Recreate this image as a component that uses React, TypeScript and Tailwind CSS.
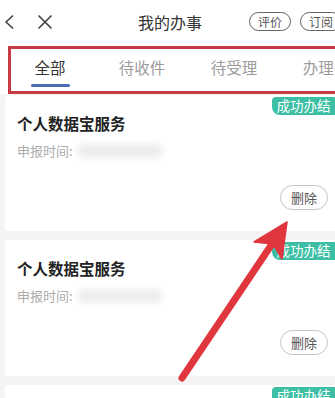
import React from 'react';

const tabs = ['全部', '待收件', '待受理', '办理中'];

const Card = ({ className = '' }: { className?: string }) => (
  <div className={`relative ml-[5px] h-[136px] shrink-0 rounded-l-[4px] bg-white pl-[12px] pr-[7px] ${className}`}>
    <div className="absolute right-0 top-[2px] flex h-[18px] w-[63px] items-center justify-center rounded-tl-[4px] rounded-bl-[8px] bg-[#3dbfa5] text-[13.5px] leading-none text-white">
      成功办结
    </div>
    <div className="pt-[17px] text-[15.5px] font-bold leading-[22px] text-[#222]">个人数据宝服务</div>
    <div className="mt-[7px] flex items-center text-[13px] leading-[20px] text-[#ababab]">
      <span>申报时间:</span>
      <span className="ml-[5px] inline-block h-[14px] w-[84px] rounded bg-[#ededed] blur-[3px]" />
    </div>
    <div className="mt-[24px] flex justify-end">
      <div className="flex h-[25px] w-[48px] items-center justify-center rounded-full border border-[#c4c4c4] text-[13px] text-[#555]">
        删除
      </div>
    </div>
  </div>
);

export default function App() {
  return (
    <div className="relative flex h-[398px] w-[335px] flex-col overflow-hidden bg-[#f4f4f4] font-['Noto_Sans_CJK_SC','Noto_Sans',sans-serif]">
      {/* header */}
      <div className="flex h-[46px] shrink-0 items-center bg-white pb-[3px]">
        <svg className="ml-[4px] shrink-0" width="10" height="14" viewBox="0 0 10 14">
          <path d="M8.5 1 L2 7 L8.5 13" fill="none" stroke="#444" strokeWidth="1.7" strokeLinecap="round" strokeLinejoin="round" />
        </svg>
        <svg className="ml-[23px] shrink-0" width="16" height="14" viewBox="0 0 16 14">
          <path d="M2 1 L14 13 M14 1 L2 13" fill="none" stroke="#444" strokeWidth="1.7" strokeLinecap="round" />
        </svg>
        <div className="ml-[85px] shrink-0 text-[16px] leading-none text-[#333]">我的办事</div>
        <div className="ml-[47px] flex h-[19px] w-[42px] shrink-0 items-center justify-center rounded-full border border-[#666] text-[12px] leading-none text-[#555]">
          评价
        </div>
        <div className="ml-[9px] flex h-[19px] w-[42px] shrink-0 items-center justify-center rounded-full border border-[#666] text-[12px] leading-none text-[#555]">
          订阅
        </div>
      </div>

      {/* tabs */}
      <div className="flex h-[48px] shrink-0 bg-white pl-[4px]">
        {tabs.map((t, i) => (
          <div key={t} className="flex w-[92px] shrink-0 flex-col items-center pt-[11px]">
            <div className={`whitespace-nowrap text-[15.5px] leading-[20px] ${i === 0 ? 'text-[#333]' : 'text-[#9b9b9b]'}`}>{t}</div>
            <div className={`mt-[7px] h-[3px] w-[39px] rounded-full ${i === 0 ? 'bg-[#4a6cb3]' : 'bg-transparent'}`} />
          </div>
        ))}
      </div>

      {/* list */}
      <div className="flex flex-col gap-[9px] pt-[1px]">
        <Card />
        <Card />
        <Card />
      </div>

      {/* annotation: red box around tabs */}
      <div className="pointer-events-none absolute left-[8px] top-[46px] h-[48px] w-[340px] border-[3px] border-[#c53a43]" />

      {/* annotation: red arrow */}
      <svg className="pointer-events-none absolute left-0 top-0" width="335" height="398" viewBox="0 0 335 398">
        <line x1="182" y1="378" x2="272" y2="244" stroke="#e0363e" strokeWidth="7" strokeLinecap="round" />
        <polygon points="287,222 254,242 273,244 282,259" fill="#e0363e" stroke="#e0363e" strokeWidth="1.5" strokeLinejoin="round" />
      </svg>
    </div>
  );
}
